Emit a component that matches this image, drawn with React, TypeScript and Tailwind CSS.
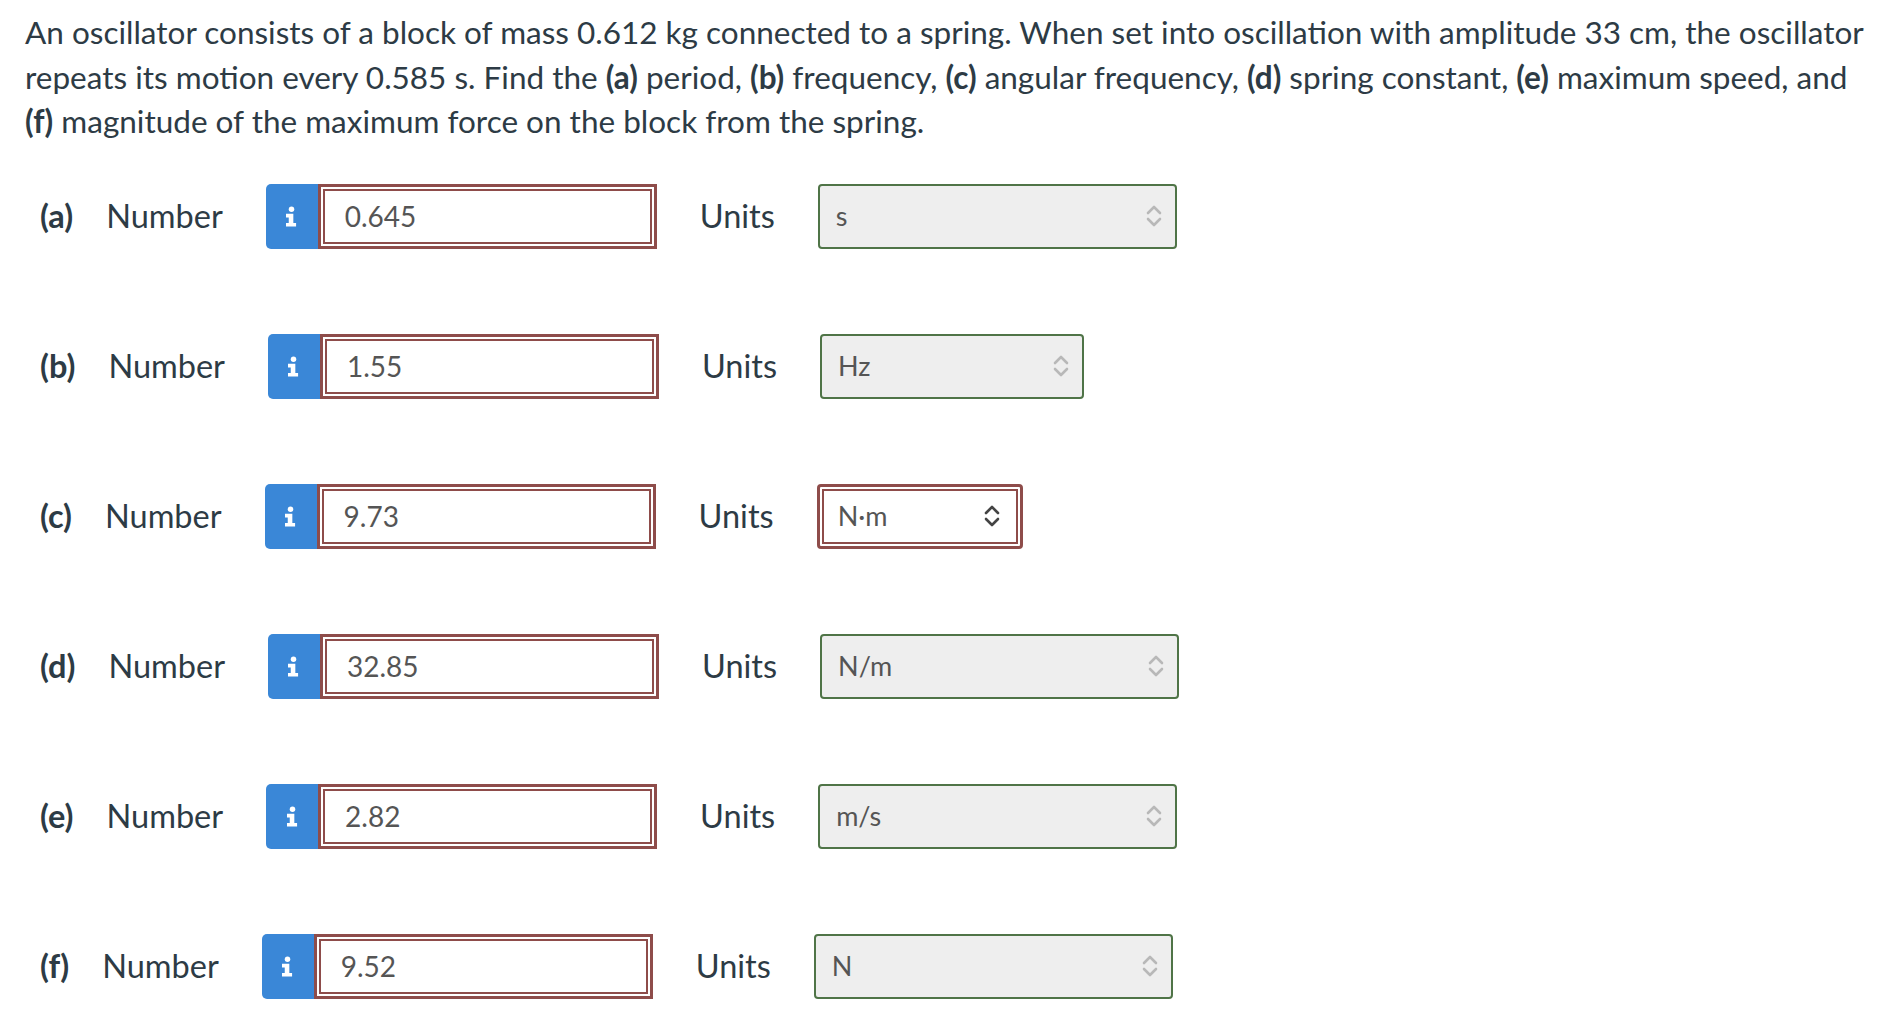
import React from 'react';

type Row = {
  label: string;
  value: string;
  unit: string;
  selectWidth: string;
  unitWrong?: boolean;
};

const rows: Row[] = [
  { label: '(a)', value: '0.645', unit: 's', selectWidth: 'w-[359px]' },
  { label: '(b)', value: '1.55', unit: 'Hz', selectWidth: 'w-[264px]' },
  { label: '(c)', value: '9.73', unit: 'N·m', selectWidth: 'w-[206px]', unitWrong: true },
  { label: '(d)', value: '32.85', unit: 'N/m', selectWidth: 'w-[359px]' },
  { label: '(e)', value: '2.82', unit: 'm/s', selectWidth: 'w-[359px]' },
  { label: '(f)', value: '9.52', unit: 'N', selectWidth: 'w-[359px]' },
];

function InfoIcon() {
  return (
    <svg width="11" height="21" viewBox="0 0 12 22" fill="#ffffff">
      <circle cx="6" cy="3" r="3" />
      <path d="M0 8h8v10h3v4H0v-4h3v-6H0z" />
    </svg>
  );
}

function Chevrons({ dark }: { dark?: boolean }) {
  return (
    <svg width="16" height="22" viewBox="0 0 16 22" fill="none" stroke={dark ? '#444' : '#b8b8b8'} strokeWidth="2.6" strokeLinecap="round" strokeLinejoin="round">
      <path d="M2 8l6-6 6 6" />
      <path d="M2 14l6 6 6-6" />
    </svg>
  );
}

function AnswerRow({ row }: { row: Row }) {
  return (
    <div className="flex items-center h-[65px] pl-[15px] text-[32.5px]">
      <span className="font-bold mr-[33px]">{row.label}</span>
      <span className="mr-[43px]">Number</span>
      <div className="flex h-[65px]">
        <div className="w-[52px] h-full bg-[#3a87d7] rounded-l-[5px] flex items-center justify-center">
          <InfoIcon />
        </div>
        <div className="w-[339px] h-full border-[3px] border-[#8e4c4a] p-[2px] bg-white">
          <div className="h-full border-2 border-[#8e4c4a] flex items-center pl-[20px] text-[28px] text-[#555555]">
            {row.value}
          </div>
        </div>
      </div>
      <span className="ml-[43px] mr-[43px]">Units</span>
      {row.unitWrong ? (
        <div className={`${row.selectWidth} h-[65px] border-[3px] border-[#8e4c4a] rounded-[4px] p-[2px] bg-white`}>
          <div className="h-full border-2 border-[#8e4c4a] flex items-center justify-between pl-[14px] pr-[16px] text-[27px] text-[#555555]">
            <span>{row.unit}</span>
            <Chevrons dark />
          </div>
        </div>
      ) : (
        <div className={`${row.selectWidth} h-[65px] border-2 border-[#4f7447] rounded-[4px] bg-[#eeeeee] flex items-center justify-between pl-[16px] pr-[13px] text-[27px] text-[#555555]`}>
          <span>{row.unit}</span>
          <Chevrons />
        </div>
      )}
    </div>
  );
}

export default function App() {
  return (
    <div className="min-h-screen bg-white text-[#2d3b45] font-['Lato',sans-serif] pl-[25px] pr-[4px] pt-[10px]">
      <p className="text-[31.5px] leading-[44.5px] whitespace-nowrap">
        An oscillator consists of a block of mass 0.612 kg connected to a spring. When set into oscillation with amplitude 33 cm, the oscillator
        <br />
        repeats its motion every 0.585 s. Find the <b>(a)</b> period, <b>(b)</b> frequency, <b>(c)</b> angular frequency, <b>(d)</b> spring
        constant, <b>(e)</b> maximum speed, and
        <br />
        <b>(f)</b> magnitude of the maximum force on the block from the spring.
      </p>

      {/* answer rows */}
      <div className="mt-[40px] flex flex-col gap-[85px]">
        {rows.map((row) => (
          <AnswerRow key={row.label} row={row} />
        ))}
      </div>
    </div>
  );
}
